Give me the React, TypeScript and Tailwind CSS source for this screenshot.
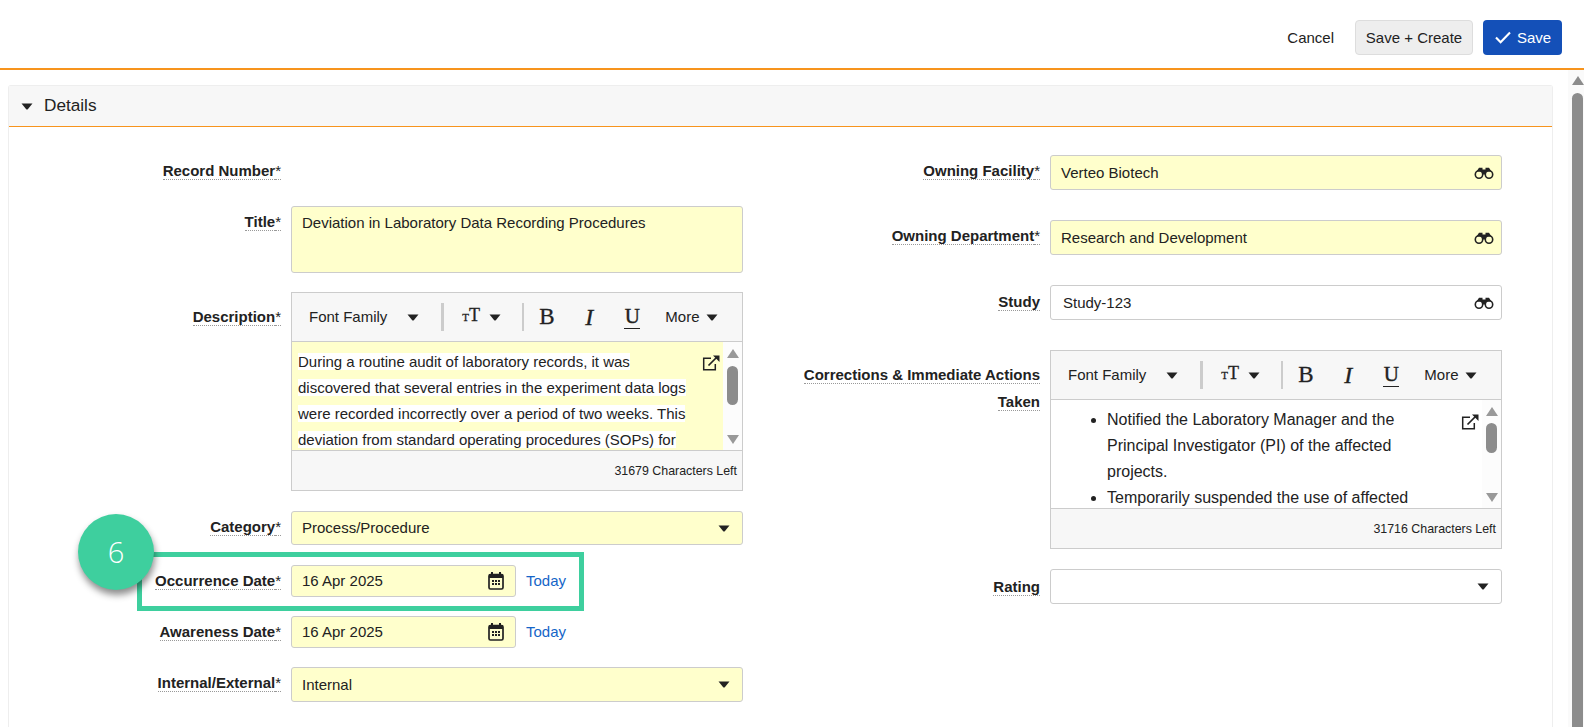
import type { ReactNode } from "react";

function Caret({ className = "" }: { className?: string }) {
  return (
    <svg viewBox="0 0 12 7" className={`w-3 h-[7px] shrink-0 ${className}`} fill="#222">
      <path d="M0.5 0.5h11L6.8 6.2q-.8.8-1.6 0z" />
    </svg>
  );
}

function Binoculars() {
  return (
    <svg viewBox="0 0 20 12" className="w-5 h-3 shrink-0" fill="none">
      <circle cx="5" cy="7.5" r="3.7" stroke="#222" strokeWidth="1.6" />
      <circle cx="15" cy="7.5" r="3.7" stroke="#222" strokeWidth="1.6" />
      <path d="M2.5 4.5L5 .8h3.5v1.7h3V.8H15l2.5 3.7H12v3H8v-3z" fill="#222" />
    </svg>
  );
}

function CalendarIcon() {
  return (
    <svg viewBox="0 0 16 18" className="w-4 h-[18px] shrink-0">
      <path d="M3 0h2v3H3zM11 0h2v3h-2z" fill="#222" />
      <rect x="1" y="2.5" width="14" height="14.5" rx="1.5" fill="none" stroke="#222" strokeWidth="1.7" />
      <rect x="1" y="2.5" width="14" height="3.5" fill="#222" />
      <path d="M4 8h2v2H4zM7 8h2v2H7zM10 8h2v2h-2zM4 11h2v2H4zM7 11h2v2H7zM10 11h2v2h-2z" fill="#222" />
    </svg>
  );
}

function ExternalIcon() {
  return (
    <svg viewBox="0 0 18 16" className="w-[18px] h-4" fill="none" stroke="#222">
      <path d="M9 3.2H1.7v11.6h11.6V9" strokeWidth="1.5" />
      <path d="M6.5 10.5L15 2" strokeWidth="1.7" />
      <path d="M11 .5h6.5V7z" fill="#222" stroke="none" />
    </svg>
  );
}

function CheckIcon() {
  return (
    <svg viewBox="0 0 16 13" className="w-4 h-[13px] shrink-0" fill="none" stroke="#fff" strokeWidth="2.1">
      <path d="M1 6.5l4.6 4.8L15 1.5" />
    </svg>
  );
}

function Label({ text, req, pad = "pt-1.5" }: { text: string; req?: boolean; pad?: string }) {
  return (
    <div className={`w-[272px] shrink-0 text-right ${pad}`}>
      <span className="border-b border-dotted border-[#999] font-bold text-[#222]">{text}</span>
      {req && <span className="border-b border-dotted border-[#999] text-[#222]">*</span>}
    </div>
  );
}

function Row({ label, req, className = "", pad, labelW, children }: { label: string; req?: boolean; className?: string; pad?: string; labelW?: string; children?: ReactNode }) {
  return (
    <div className={`flex gap-2.5 leading-[20px] ${className}`}>
      <div className={labelW ?? "w-[272px] shrink-0"}>
        <Label text={label} req={req} pad={pad} />
      </div>
      {children}
    </div>
  );
}

function InputBox({ value, yellow, h = "h-[35px]", pl = "pl-2.5", icon }: { value: string; yellow?: boolean; h?: string; pl?: string; icon?: ReactNode }) {
  return (
    <div className={`w-[452px] shrink-0 ${h} ${yellow ? "bg-[#ffffcc]" : "bg-white"} border border-[#ccc] rounded-[3px] flex items-center justify-between ${pl} pr-[7px] text-[#222]`}>
      <span>{value}</span>
      {icon}
    </div>
  );
}

function DateField({ value }: { value: string }) {
  return (
    <div className="flex items-center">
      <div className="w-[225px] h-8 bg-[#ffffcc] border border-[#ccc] rounded-[3px] flex items-center justify-between pl-2.5 pr-[11px] text-[#222]">
        <span>{value}</span>
        <CalendarIcon />
      </div>
      <span className="ml-2.5 text-[#1565c8]">Today</span>
    </div>
  );
}

function Toolbar() {
  return (
    <div className="h-[49px] bg-[#f7f7f7] border-b border-[#ccc] flex items-center text-[#222]">
      <span className="ml-[17px]">Font Family</span>
      <Caret className="ml-5" />
      <div className="ml-[22px] w-[3px] h-7 bg-[#ccc]" />
      <span className="ml-[18px] w-5 flex items-baseline font-['Liberation_Serif',serif] leading-none -mt-1 [-webkit-text-stroke:0.3px_#222]">
        <span className="text-[11px]">T</span>
        <span className="text-[18px]">T</span>
      </span>
      <Caret className="ml-[7px]" />
      <div className="ml-[21px] w-0.5 h-7 bg-[#ccc]" />
      <span className="ml-[15px] w-4 font-['Liberation_Serif',serif] text-[23px] [-webkit-text-stroke:0.3px_#222]">B</span>
      <span className="ml-[30px] w-3 font-['Liberation_Serif',serif] italic text-[24px] [-webkit-text-stroke:0.3px_#222]">I</span>
      <span className="ml-[27px] w-4 h-[23px] border-b-[1.5px] border-[#222] font-['Liberation_Serif',serif] text-[21px] leading-[20px] text-center [-webkit-text-stroke:0.4px_#222]">U</span>
      <span className="ml-[25px]">More</span>
      <Caret className="ml-1.5" />
    </div>
  );
}

function EditorScroll({ thumb, down }: { thumb: string; down: string }) {
  return (
    <div className="w-[19px] shrink-0 bg-[#fcfcfc] flex flex-col items-center pt-[7px]">
      <div className="w-0 h-0 border-x-[6px] border-x-transparent border-b-[9px] border-b-[#999]" />
      <div className={`w-[11px] rounded-full bg-[#8c8c8c] ${thumb}`} />
      <div className={`w-0 h-0 border-x-[6px] border-x-transparent border-t-[9px] border-t-[#999] ${down}`} />
    </div>
  );
}

function Editor({ body, yellow, iconTop, thumb, down, children }: { body: string; yellow?: boolean; iconTop: string; thumb: string; down: string; children: ReactNode }) {
  return (
    <div className="w-[452px] border border-[#ccc] bg-white">
      <Toolbar />
      <div className="h-[108px] flex overflow-hidden">
        <div className={`relative flex-1 ${body} ${yellow ? "bg-[#ffffcc]" : "bg-white"} leading-[26px] text-[#222]`}>
          {children}
          <div className={`absolute right-[3px] ${iconTop}`}>
            <ExternalIcon />
          </div>
        </div>
        <EditorScroll thumb={thumb} down={down} />
      </div>
    </div>
  );
}

function Footer({ left }: { left: string }) {
  return (
    <div className="w-[452px] h-10 bg-[#f7f7f7] border-x border-b border-[#ccc] flex items-center justify-end pr-[5px] text-[12.4px] text-[#222]">
      {left} Characters Left
    </div>
  );
}

export default function App() {
  return (
    <div className="relative w-[1584px] h-[727px] overflow-hidden bg-white text-[15px] font-['Liberation_Sans',Arial,sans-serif]">
      {/* Top actions */}
      <header className="h-[70px] border-b-2 border-[#f7941d] flex justify-end items-start pt-5 pr-[22px]">
        <button className="h-[35px] pt-0.5 text-[#222] mr-[21px]">Cancel</button>
        <button className="h-[35px] w-[118px] pt-0.5 bg-[#eee] border border-[#ddd] rounded text-[#222]">Save + Create</button>
        <button className="h-[35px] w-[79px] ml-2.5 bg-[#1450b8] rounded text-white flex items-center gap-[6px] pl-3">
          <CheckIcon />
          <span className="pt-0.5">Save</span>
        </button>
      </header>

      <div className="flex h-[657px]">
        <main className="flex-1 min-w-0 pl-2 pr-[15px] pt-[15px]">
          <section className="h-full border border-b-0 border-[#eee] rounded-t-[3px]">
            <div className="h-[41px] bg-[#f7f7f7] border-b border-[#f7941d] flex items-center pl-3">
              <Caret />
              <span className="ml-[11px] text-[17.2px] text-[#222]">Details</span>
            </div>

            <div className="flex pt-7">
              {/* Left column */}
              <div className="w-[734px] shrink-0">
                <Row label="Record Number" req className="h-[35px]" />
                <Row label="Title" req className="mt-4">
                  <div className="w-[452px] h-[67px] bg-[#ffffcc] border border-[#ccc] rounded-[3px] pl-2.5 pt-1.5 text-[#222]">
                    Deviation in Laboratory Data Recording Procedures
                  </div>
                </Row>
                <Row label="Description" req className="mt-[19px]" pad="pt-[15px]">
                  <div>
                    <Editor body="pl-1.5 pt-[7px]" yellow iconTop="top-[13px]" thumb="h-[39px] mt-2" down="mt-[30px]">
                      <div className="w-[396px]">
                        <span className="bg-white">
                          During a routine audit of laboratory records, it was discovered that several entries in the experiment data logs were recorded incorrectly over a period of two weeks. This deviation from standard operating procedures (SOPs) for
                        </span>
                      </div>
                    </Editor>
                    <Footer left="31679" />
                  </div>
                </Row>
                <Row label="Category" req className="mt-5">
                  <InputBox value="Process/Procedure" yellow h="h-[34px]" icon={<Caret className="mr-[5px]" />} />
                </Row>
                <Row label="Occurrence Date" req className="mt-5">
                  <DateField value="16 Apr 2025" />
                </Row>
                <Row label="Awareness Date" req className="mt-[19px]">
                  <DateField value="16 Apr 2025" />
                </Row>
                <Row label="Internal/External" req className="mt-[19px]">
                  <InputBox value="Internal" yellow icon={<Caret className="mr-[5px]" />} />
                </Row>
              </div>

              {/* Right column */}
              <div className="ml-[17px] w-[742px] shrink-0">
                <Row label="Owning Facility" req labelW="w-[280px] shrink-0 [&>div]:w-[280px]">
                  <InputBox value="Verteo Biotech" yellow icon={<Binoculars />} />
                </Row>
                <Row label="Owning Department" req labelW="w-[280px] shrink-0 [&>div]:w-[280px]" className="mt-[30px]">
                  <InputBox value="Research and Development" yellow icon={<Binoculars />} />
                </Row>
                <Row label="Study" labelW="w-[280px] shrink-0 [&>div]:w-[280px]" className="mt-[30px]" pad="pt-[7px]">
                  <InputBox value="Study-123" pl="pl-3" icon={<Binoculars />} />
                </Row>
                <Row label="Corrections & Immediate Actions Taken" labelW="w-[280px] shrink-0 pl-10 [&>div]:w-[240px] leading-[27px]" className="mt-[30px]" pad="pt-[11px]">
                  <div>
                    <Editor body="pl-[38px] pt-[7px] text-[16px]" iconTop="top-[14px]" thumb="h-[30px] mt-[7px]" down="mt-[40px]">
                      <ul className="w-[333px] list-disc pl-[18px]">
                        <li>Notified the Laboratory Manager and the Principal Investigator (PI) of the affected projects.</li>
                        <li>Temporarily suspended the use of affected</li>
                      </ul>
                    </Editor>
                    <Footer left="31716" />
                  </div>
                </Row>
                <Row label="Rating" labelW="w-[280px] shrink-0 [&>div]:w-[280px]" className="mt-5" pad="pt-2">
                  <InputBox value="" icon={<Caret className="mr-[5px]" />} />
                </Row>
              </div>
            </div>
          </section>
        </main>

        {/* Page scrollbar */}
        <div className="w-4 shrink-0 bg-[#fafafa] flex flex-col items-end pt-1.5">
          <div className="w-0 h-0 border-x-[6.5px] border-x-transparent border-b-[9px] border-b-[#8c8c8c]" />
          <div className="mt-2 mr-px w-[11px] flex-1 rounded-t-full bg-[#8c8c8c]" />
        </div>
      </div>

      {/* Step callout */}
      <div className="absolute left-[137px] top-[552px] w-[447px] h-[59px] border-[5px] border-[#3ecf9e]" />
      <div className="absolute left-[78px] top-[514px] w-[76px] h-[76px] rounded-full bg-[#3ecf9e] shadow-[1px_5px_7px_rgba(0,0,0,0.45)] flex items-center justify-center text-white text-[29px] font-['Open_Sans',sans-serif] font-light">
        6
      </div>
    </div>
  );
}
